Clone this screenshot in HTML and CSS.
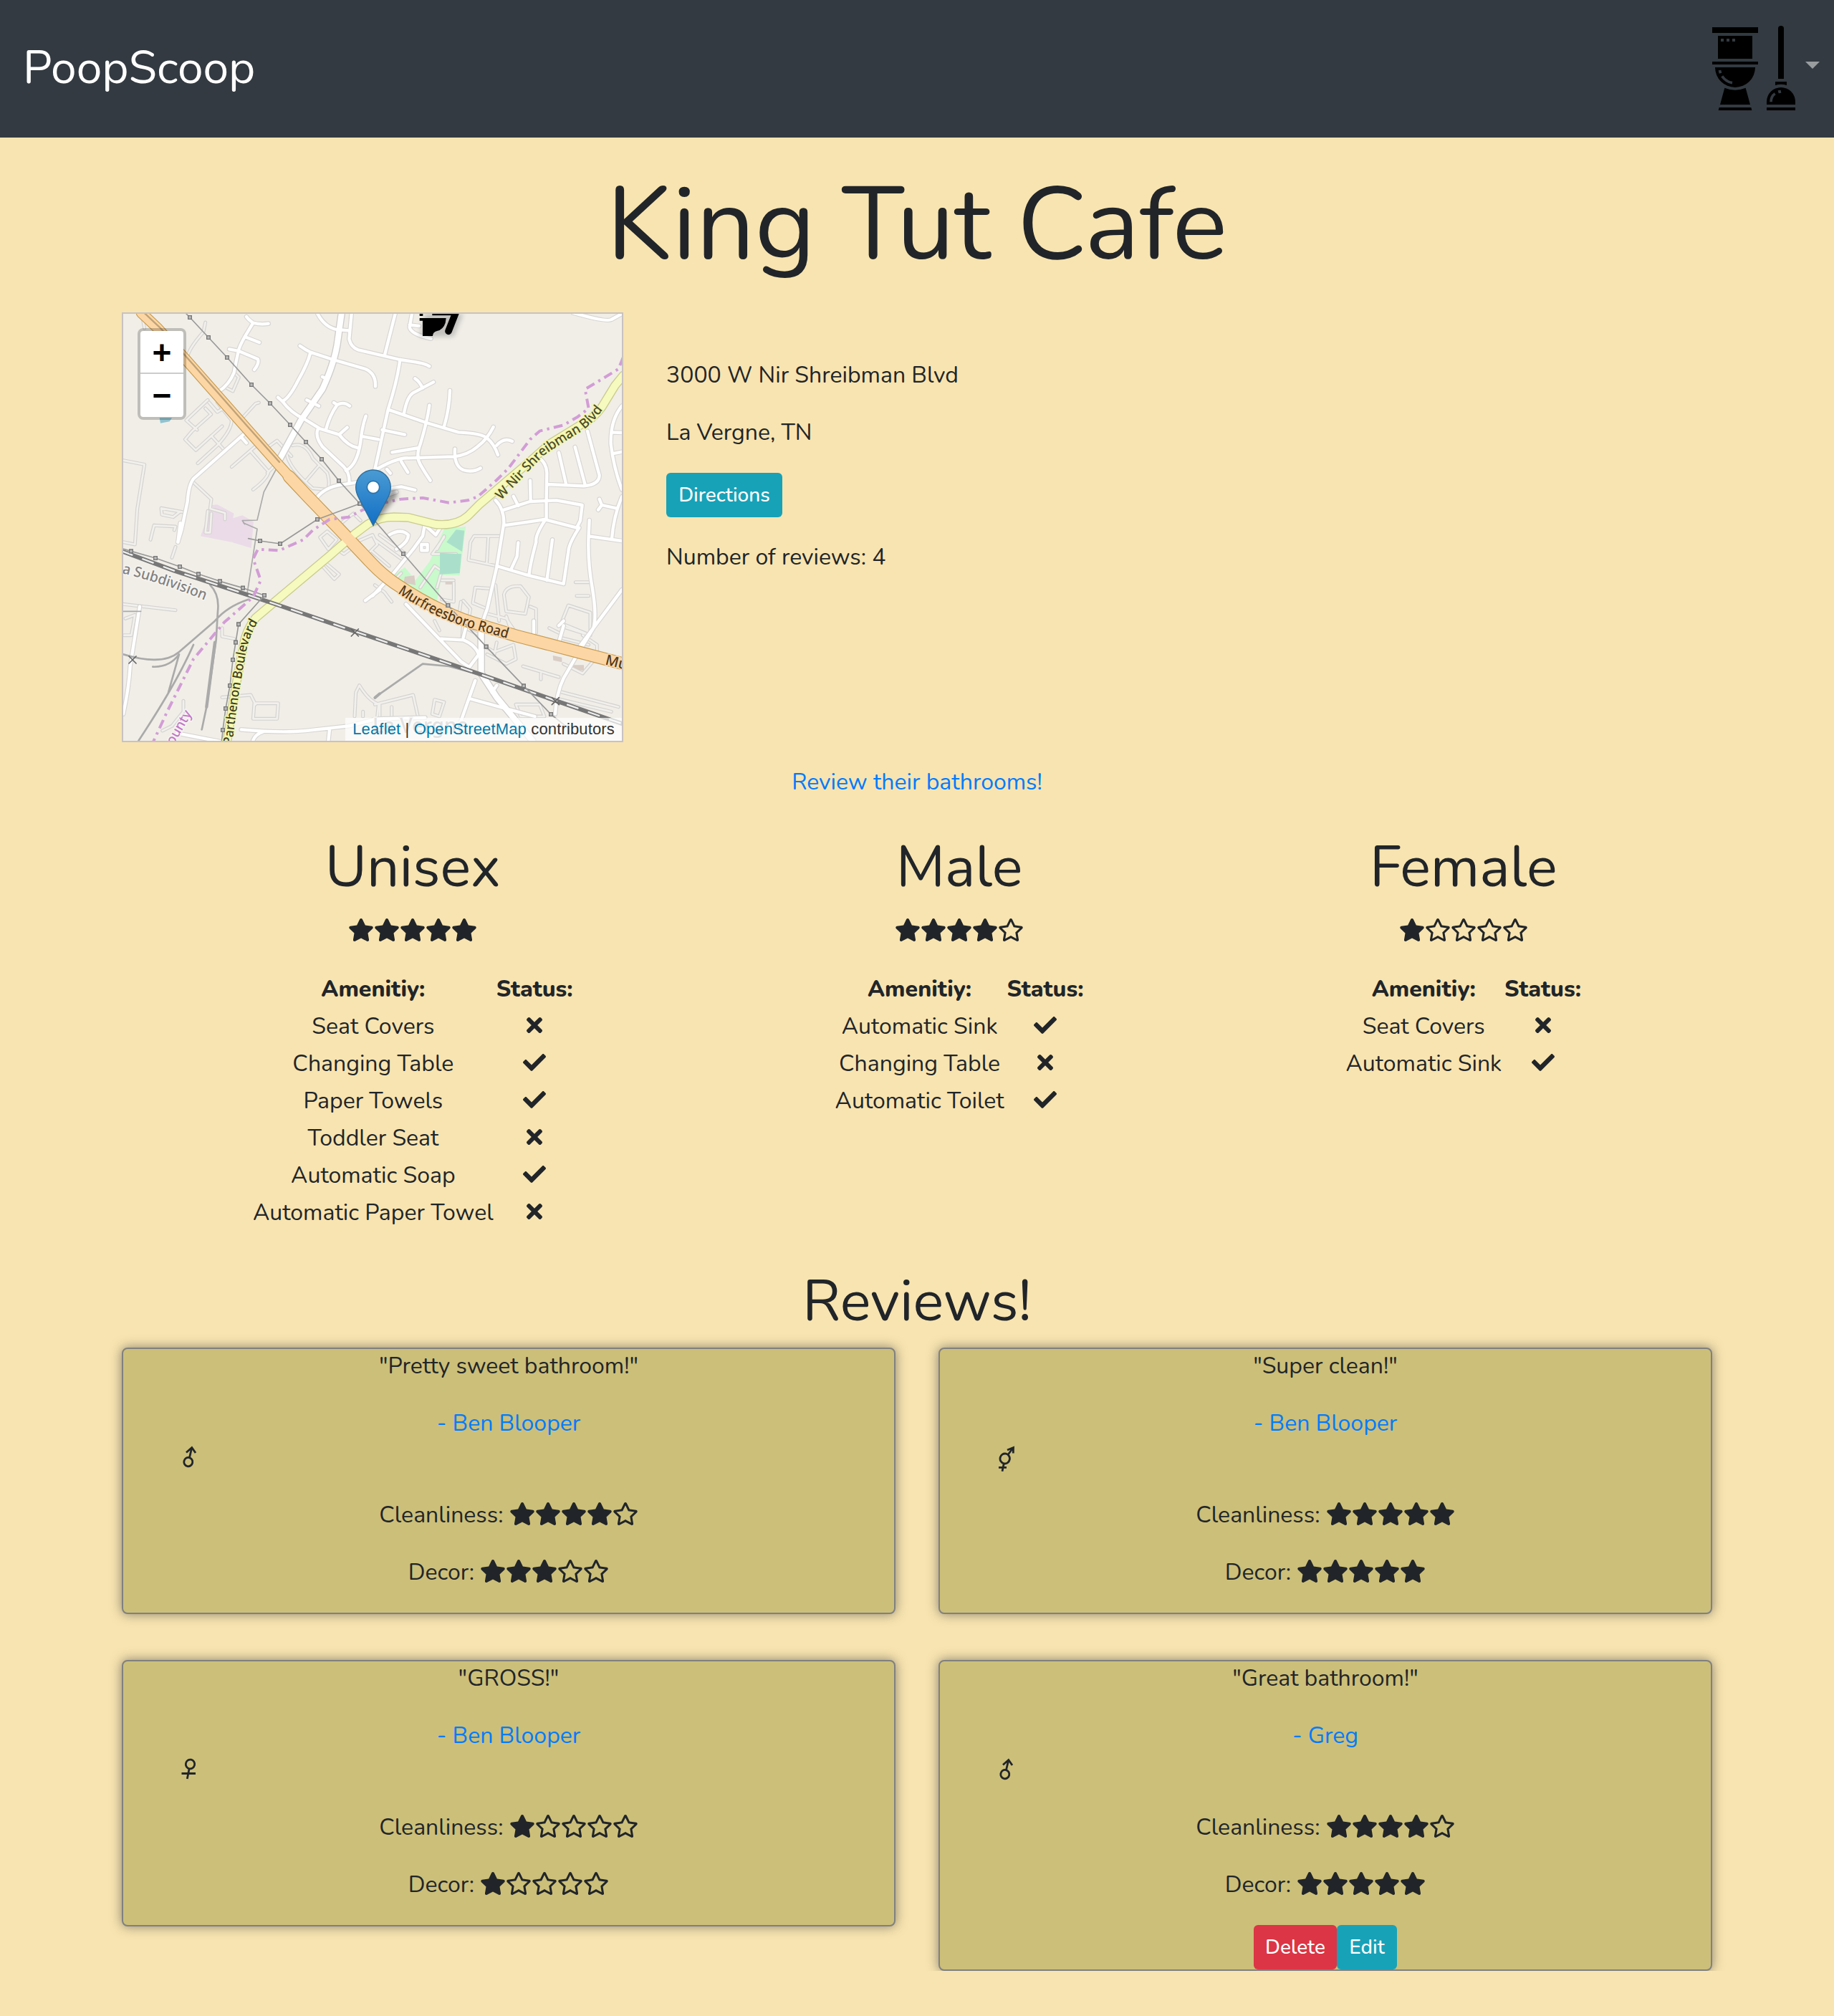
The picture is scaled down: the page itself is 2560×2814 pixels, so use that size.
FILE: index.html
```html
<!DOCTYPE html>
<html lang="en">
<head>
<meta charset="utf-8">
<title>PoopScoop - King Tut Cafe</title>
<link rel="stylesheet" href="styles.css">
</head>
<body>
<svg class="sprite" aria-hidden="true">
  <symbol id="star" viewBox="0 0 576 512"><path d="M259.3 17.8L194 150.2 47.9 171.5c-26.2 3.8-36.7 36.1-17.7 54.6l105.7 103-25 145.5c-4.5 26.3 23.2 46 46.4 33.7L288 439.6l130.7 68.7c23.2 12.2 50.9-7.4 46.4-33.7l-25-145.5 105.7-103c19-18.5 8.5-50.8-17.7-54.6L382 150.2 316.7 17.8c-11.7-23.6-45.6-23.9-57.4 0z"/></symbol>
  <symbol id="star-o" viewBox="0 0 576 512"><path d="M528.1 171.5L382 150.2 316.7 17.8c-11.7-23.6-45.6-23.9-57.4 0L194 150.2 47.9 171.5c-26.2 3.8-36.7 36.1-17.7 54.6l105.7 103-25 145.5c-4.5 26.3 23.2 46 46.4 33.7L288 439.6l130.7 68.7c23.2 12.2 50.9-7.4 46.4-33.7l-25-145.5 105.7-103c19-18.5 8.5-50.8-17.7-54.6zM388.6 312.3l23.7 138.4L288 385.4l-124.3 65.3 23.7-138.4-100.6-98 139-20.2 62.2-126 62.2 126 139 20.2-100.6 98z"/></symbol>
  <symbol id="stars-1" viewBox="0 0 180 32"><use href="#star" width="36" height="32"/><use href="#star-o" x="36" width="36" height="32"/><use href="#star-o" x="72" width="36" height="32"/><use href="#star-o" x="108" width="36" height="32"/><use href="#star-o" x="144" width="36" height="32"/></symbol>
  <symbol id="stars-3" viewBox="0 0 180 32"><use href="#star" width="36" height="32"/><use href="#star" x="36" width="36" height="32"/><use href="#star" x="72" width="36" height="32"/><use href="#star-o" x="108" width="36" height="32"/><use href="#star-o" x="144" width="36" height="32"/></symbol>
  <symbol id="stars-4" viewBox="0 0 180 32"><use href="#star" width="36" height="32"/><use href="#star" x="36" width="36" height="32"/><use href="#star" x="72" width="36" height="32"/><use href="#star" x="108" width="36" height="32"/><use href="#star-o" x="144" width="36" height="32"/></symbol>
  <symbol id="stars-5" viewBox="0 0 180 32"><use href="#star" width="36" height="32"/><use href="#star" x="36" width="36" height="32"/><use href="#star" x="72" width="36" height="32"/><use href="#star" x="108" width="36" height="32"/><use href="#star" x="144" width="36" height="32"/></symbol>
  <symbol id="times" viewBox="0 0 352 512"><path d="M242.72 256l100.07-100.07c12.28-12.28 12.28-32.19 0-44.48l-22.24-22.24c-12.28-12.28-32.19-12.28-44.48 0L176 189.28 75.93 89.21c-12.28-12.28-32.19-12.28-44.48 0L9.21 111.45c-12.28 12.28-12.28 32.19 0 44.48L109.28 256 9.21 356.07c-12.28 12.28-12.28 32.19 0 44.48l22.24 22.24c12.28 12.28 32.2 12.28 44.48 0L176 322.72l100.07 100.07c12.28 12.28 32.2 12.28 44.48 0l22.24-22.24c12.28-12.28 12.28-32.19 0-44.48L242.72 256z"/></symbol>
  <symbol id="check" viewBox="0 0 512 512"><path d="M173.898 439.404l-166.4-166.4c-9.997-9.997-9.997-26.206 0-36.204l36.203-36.204c9.997-9.998 26.207-9.998 36.204 0L192 312.69 432.095 72.596c9.997-9.997 26.207-9.997 36.204 0l36.203 36.204c9.997 9.997 9.997 26.206 0 36.204l-294.4 294.401c-9.998 9.997-26.207 9.997-36.204-.001z"/></symbol>
  <symbol id="male" viewBox="0 0 32 48"><g fill="none" stroke="currentColor" stroke-width="2.8"><ellipse cx="14.800" cy="29.600" rx="6" ry="6.200" transform="rotate(12 14.800 29.600)"/><path d="M16.4 24L19.800 9.500M12 16.500L19.800 9.500L25 17"/></g></symbol>
  <symbol id="female" viewBox="0 0 32 48"><g fill="none" stroke="currentColor" stroke-width="2.8"><ellipse cx="17.500" cy="15.500" rx="6.200" ry="6.400" transform="rotate(12 17.500 15.500)"/><path d="M16.200 21.500L13.300 36M5.500 28.500H25"/></g></symbol>
  <symbol id="unisex" viewBox="0 0 32 48"><g fill="none" stroke="currentColor" stroke-width="2.8"><ellipse cx="14.700" cy="25" rx="6.700" ry="7" transform="rotate(12 14.700 25)"/><path d="M19 19.500L26 10M18 13L26.500 9.500L26.300 17.500M13.200 32L11 42.700M6 37.300H17"/></g></symbol>
</svg>

<nav class="navbar">
  <a class="brand">PoopScoop</a>
  <a class="menu">
    <svg class="menu-icon" viewBox="150 108 348 354">
      <path d="M150 114h192v24H150zM174 150h144v96H174zM150 258h192v12H150zM162 282h168a84 84 0 0 1-168 0zM202 368q44 18 88 0l19 70H183zM179 450h134l3 12H176zM426 330V119a12 11 0 0 1 24 0v211zM414 342h48v15q-24-8-48 0zM378 438v-12a60 60 0 0 1 120 0v12zM378 450h120v12H378z"/>
      <path class="cut" d="M186 162h12v12h-12zM210 162h12v12h-12zM234 162h12v12h-12zM176 295l11-2 3 12-11 3zM425 379l12-2 2 12-11 2z"/>
      <path class="shine" d="M191 319q18 24 43 28M396 427q0-24 17-35"/>
    </svg>
    <span class="caret"></span>
  </a>
</nav>

<main class="container">
  <h1 class="title">King Tut Cafe</h1>

  <section class="place">
    <div class="map">
      <svg class="tiles" viewBox="36 54 2088 1788">
        <defs>
          <linearGradient id="pin" x1="0" y1="0" x2="0" y2="1"><stop offset="0" stop-color="#4a9bd3"/><stop offset="1" stop-color="#126fc6"/></linearGradient>
          <filter id="soft" x="-50%" y="-50%" width="200%" height="200%"><feGaussianBlur stdDeviation="9"/></filter>
          <marker id="tower" viewBox="0 0 18 18" refX="9" refY="9" markerWidth="20" markerHeight="20" markerUnits="userSpaceOnUse"><path d="M2.500 2.500h13v13h-13z" fill="#bbb" stroke="#777" stroke-width="4"/></marker>
          <g id="service">
            <path d="M115 60L125 115M380 90L372 130Q310 200 305 235M390 415L300 500L345 540M380 450L404 475L325 545L295 580L340 625L450 525M405 565L455 620M348 680L430 605Q490 540 490 500L430 425M490 695L600 600M570 630L645 715Q640 745 580 790M535 490L590 430L604 426M500 300L520 320L495 378L470 365M430 410L455 450L430 465L395 425M645 610L680 585L740 650M745 605Q800 590 830 660L890 720Q905 770 890 790L830 785Q730 700 720 640M855 690L800 755M670 690L640 720M36 668L125 685L95 870L85 1020L36 1010"/>
            <path d="M290 885L195 868L198 895L245 905L272 884M165 940L255 945L250 960M165 940L150 1000M330 760L405 830L400 870L462 888L462 915M390 880L380 970L400 970L405 890M36 1270L255 1295M45 1330L85 1315L70 1400L40 1400M450 1370V1405L500 1415M255 1030L240 1075M288 1675V1720L240 1780L200 1800M450 1660L570 1650L590 1690M585 1685H685L680 1750H580ZM1005 1740L1010 1640L1025 1610Q1060 1670 1105 1690L1100 1740M1040 1720V1740"/>
            <path d="M860 990L890 965L930 1000L895 1040ZM950 930L1000 890L1030 920M930 1040L960 1060L1000 1030M875 1090L940 1145L920 1165L870 1110M1010 1010L1080 980L1100 1020L1060 1060M1090 1000L1200 1080M1110 980L1220 1060M1080 1050L1150 1110M1060 1090L1110 1130M1090 1190L1130 1220L1160 1260M1110 1140L1160 1180L1200 1140"/>
            <path d="M1490 1010L1505 985L1620 985M1490 1010L1482 1085L1600 1110M1565 990L1558 1100M1510 1200L1500 1265L1560 1290M1510 1200L1580 1205M1450 1260L1440 1330L1510 1360M1460 1255L1490 1290L1480 1350M1630 1230Q1640 1190 1700 1195L1735 1240L1720 1310L1640 1300ZM1595 1190L1610 1340M1560 1310L1640 1330L1680 1390M1640 1320L1660 1380M1740 1280L1765 1290V1390M1820 1370L1860 1390M1900 1275L1992 1305V1400L1870 1350ZM1880 1365L1990 1400M1865 1410L1985 1440M1555 1450L1590 1470L1670 1440L1680 1500L1640 1520L1560 1480M1600 1430L1590 1480M1340 1340L1360 1380M1460 1350L1455 1410M1470 1370L1530 1400M1960 1400L2020 1440V1490L1960 1560L1880 1520"/>
            <path d="M1710 1530L1860 1575M1785 1560V1585M1860 1635L2110 1700M1850 1665L2080 1720M1680 1690L1700 1740L1800 1740L1780 1690ZM1340 1670L1380 1680L1360 1740L1330 1730ZM1090 1690L1250 1650L1270 1740M1110 1690V1740M1160 1700V1740M1930 1178H1990M1935 1235H1985M1370 1170H1420M1370 1250L1420 1260V1180M1380 990L1330 1060L1430 1060M1380 985L1350 1040M1280 1200L1340 1110L1370 1130L1350 1200"/>
          </g>
          <g id="roads">
            <path d="M552 66Q560 78 580 92Q610 100 644 95M580 92L545 150Q520 195 518 212Q505 270 500 300Q480 350 435 380M545 150L606 174M480 202L520 210L600 244Q606 262 585 288M850 54Q880 110 930 120L980 124M992 54L982 160Q990 195 1020 205L1195 246L1260 256Q1300 262 1318 274M776 188Q800 205 820 215L915 246L1050 285Q1095 305 1092 358M820 215Q810 260 770 330Q730 410 702 420M684 404L702 420Q740 470 790 492L860 535L940 560Q980 610 1018 615M885 538Q900 480 932 435L918 426M932 435Q960 420 984 440M940 560L974 530M1052 482Q1035 530 1030 590Q1015 690 968 710M1040 568L1105 580M850 540Q840 570 870 610L960 695Q985 720 982 760M870 318L885 325M805 415L855 440M845 826Q880 780 950 770L1080 750M550 550L330 745Q310 770 305 840L280 960L265 1010M530 570L552 595"/>
            <path d="M1175 54L1130 230M1195 246Q1185 330 1145 455Q1115 590 1080 750M1145 455L1305 510L1440 550Q1540 555 1560 575Q1590 600 1605 645M1212 470Q1225 400 1250 385L1335 340M1290 365Q1275 335 1258 325M1404 375Q1402 450 1380 525M1318 437Q1310 500 1280 600Q1260 650 1280 685Q1300 720 1322 752M1120 540L1215 560M1162 634L1275 615M1080 715Q1180 655 1230 658L1420 652Q1480 645 1520 610Q1560 580 1586 528M1425 620Q1420 690 1460 708Q1500 720 1532 700M1600 605Q1630 570 1665 588M1200 672L1228 718M1245 54L1235 110Q1240 140 1325 158M1235 100L1275 105M1160 785L1200 778L1258 792M1140 705L1155 722M1110 825L1180 800M1920 50Q2060 90 2080 78L2124 54"/>
            <path d="M1980 545L2030 730Q2030 770 1965 775L1812 768M1860 635L1890 765M1928 612L1970 770M1780 660Q1808 680 1810 720L1808 835L1808 910Q1760 980 1765 1010Q1740 1100 1735 1150M1595 835Q1630 870 1630 930L1600 1115L1560 1290Q1540 1340 1535 1380M1630 875L1740 840L1850 835L1958 855L1950 920L1935 950L1800 915L1735 925L1630 940M1740 752L1742 835M1670 818L1690 858M2124 440Q2075 500 2078 600Q2090 700 2124 790M2080 550L2124 552M2084 640L2124 632M2124 820Q2090 900 2082 995M2100 868L2040 855L2030 830M2040 855L2025 875M1988 918L1985 980Q1980 1090 2000 1200Q2020 1320 2005 1370L1950 1460L1880 1580Q1850 1640 1845 1730M1985 985L2124 1005M2124 1210L1945 1450M1945 950Q1900 1020 1900 1050L1880 1185L1735 1150L1600 1110M1690 1012L1685 1070L1662 1120M1833 1000L1810 1170"/>
            <path d="M1150 980Q1200 950 1230 980Q1230 1010 1180 1040M1300 930L1290 985L1250 1040L1160 1150L1080 1235M1290 930L1345 980L1370 940M1285 1020h25v25h-25zM1220 1270L1450 1510L1480 1530M1365 1415L1460 1420Q1510 1440 1525 1480L1480 1540M1460 1410L1470 1370M1860 1360L1880 1340M1510 1590L1450 1760M1485 1665L1630 1705L1760 1740M1600 1610L1580 1640M1860 1430L1880 1360M105 1280L65 1530Q60 1620 36 1730M275 930L265 1010M260 1810L440 1845M530 1795Q700 1810 800 1800L980 1780L1100 1750L1300 1745M580 1840Q590 1815 620 1805M900 1795L895 1842M1050 1255L1110 1210M1755 1340V1390"/>
          </g>
          <g id="collector"><path d="M950 54L935 160Q925 250 870 370L780 500L690 665M1535 1390V1560L1600 1660L1750 1842"/></g>
          <path id="trunkNorth" d="M112 50L180 114L300 248L540 520L690 690L780 790"/>
          <path id="trunkSouth" d="M730 735L810 820L940 955L1080 1103Q1120 1145 1170 1180Q1280 1255 1380 1300Q1450 1335 1540 1360L1680 1402L1940 1470L2140 1522"/>
          <path id="second" d="M2130 312L2095 355L2040 445Q2000 500 1950 520L1820 600L1730 680L1530 850L1480 900Q1430 945 1340 935L1230 907L1170 905Q1110 905 1060 935L1000 980L900 1067L700 1235L590 1328Q550 1380 540 1440L510 1600L490 1720L470 1850"/>
          <path id="wire" d="M300 54L315 69L393 153L471 237L573 351L651 429L735 519L801 591L867 663L939 753L1027 849L1209 1059L1396 1275L1556 1448L1713 1612L1827 1731L1900 1790"/>
          <path id="nirText" d="M1618 835Q1740 705 1800 645Q1880 590 1950 550Q2010 510 2065 425"/>
          <path id="parText" d="M492 1860Q515 1660 545 1500Q560 1400 610 1330"/>
          <path id="murText" d="M1185 1222Q1330 1325 1490 1370Q1600 1400 1680 1424"/>
          <path id="subText" d="M30 1140Q200 1180 400 1262"/>
        </defs>
        <path d="M0 0H2200V1900H0z" fill="#f1eee8"/>
        <path d="M408 855L430 853L500 890L496 910L535 898L582 925L572 1035L490 1010L360 985L390 900z" fill="#ebdbe8"/>
        <path d="M1380 955L1470 945L1445 1150L1370 1148L1348 1270L1260 1230L1160 1155L1215 1115L1260 1170L1320 1090z" fill="#c8facc"/>
        <path d="M188 490H240L230 505L192 512z" fill="#8fc3d0"/>
        <path d="M1215 1155L1255 1150L1260 1190L1210 1180zM1385 1165h40v22h-40zM1835 1485l38 8v20l-36-8zM1920 1525h45v22h-45z" fill="#d9cdc5"/>
        <g class="lines">
          <use href="#service" stroke="#d4d2d0" stroke-width="15"/>
          <use href="#service" stroke="#f2f0ed" stroke-width="8"/>
          <use href="#roads" stroke="#d8d6d4" stroke-width="20"/>
          <use href="#collector" stroke="#cfcdcb" stroke-width="32"/>
          <use href="#roads" stroke="#fff" stroke-width="13"/>
          <use href="#collector" stroke="#fff" stroke-width="24"/>
          <path d="M1390 1010L1430 958L1465 962L1455 1050zM1362 1055L1452 1060L1445 1140L1362 1145z" fill="#aae0cb"/>
          <g stroke="#aaa" stroke-width="8">
            <path d="M400 1190Q440 1230 432 1300L425 1420L385 1700L365 1795M560 1250Q470 1280 420 1340L270 1470Q200 1530 36 1480M160 1532Q230 1535 270 1480L225 1640M330 1440Q260 1600 100 1842M1090 1660L1290 1520L1400 1530L1530 1565"/>
            <path d="M420 1430L385 1700" stroke-width="13"/><path d="M1090 1662L1110 1645" stroke-width="12"/>
          </g>
          <path d="M690 680L625 800L597 918L535 920L545 935M540 930L597 955L555 1225M36 1300H110" stroke="#aaa" stroke-width="5"/>
          <use href="#second" stroke="#c9cc8d" stroke-width="38"/>
          <use href="#trunkNorth" stroke="#c79b50" stroke-width="46"/>
          <use href="#trunkSouth" stroke="#c79b50" stroke-width="54"/>
          <use href="#second" stroke="#f7fabf" stroke-width="30"/>
          <use href="#trunkNorth" stroke="#fcd6a4" stroke-width="39"/>
          <use href="#trunkSouth" stroke="#fcd6a4" stroke-width="47"/>
          <path d="M124 50L190 112L310 245L550 518L690 675" stroke="#c0a278" stroke-width="7"/>
          <path d="M30 1048L250 1130L560 1232L680 1272L1000 1382L1530 1563L1850 1675L2080 1755L2130 1772" stroke="#777" stroke-width="18"/>
          <path d="M30 1048L250 1130L560 1232L680 1272L1000 1382L1530 1563L1850 1675L2080 1755L2130 1772" stroke="#eee" stroke-width="7" stroke-dasharray="46 48"/>
          <g stroke="#999" stroke-width="5" marker-mid="url(#tower)">
            <use href="#wire"/>
            <path d="M1027 849L1027 849L849 915L693 1017L609 1005L560 995"/>
            <path d="M30 1037L69 1048L171 1077L273 1113L351 1144L441 1174L537 1202L627 1233L519 1354L507 1430L495 1503L483 1611L465 1707L453 1797L448 1850"/>
          </g>
          <path d="M60 1488l30 30m0-30l-30 30M991 1374l30 30m0-30l-30 30M1831 1661l30 30m0-30l-30 30" stroke="#666" stroke-width="5"/>
          <path d="M2130 235L2110 285L2020 340L1970 370L1985 450L1940 485L1880 520L1780 545L1740 580L1650 700L1600 750L1520 820L1480 835L1400 845L1290 825L1200 830L1080 855L980 905L900 915L830 960L790 1000L690 1045L600 1040L580 1080L612 1170L580 1240L460 1345L330 1500L280 1600L220 1720L160 1850" stroke="#d29dd6" stroke-width="12" stroke-dasharray="38 19 10 19" stroke-linecap="butt"/>
        </g>
        <g class="labels">
          <text font-size="56" fill="#4c4a2c" stroke="#f2f6a9"><textPath href="#nirText" textLength="575" lengthAdjust="spacingAndGlyphs">W Nir Shreibman Blvd</textPath></text>
          <text font-size="54" fill="#3c3c25" stroke="#f2f6a9"><textPath href="#parText" textLength="530" lengthAdjust="spacingAndGlyphs">Parthenon Boulevard</textPath></text>
          <text font-size="60" fill="#4d3820" stroke="#fcd6a4"><textPath href="#murText" textLength="500" lengthAdjust="spacingAndGlyphs">Murfreesboro Road</textPath></text>
          <text font-size="60" fill="#4d3820" stroke="#fcd6a4" transform="translate(2052 1522) rotate(14)">Mu</text>
          <text font-size="60" fill="#808080" stroke="#f6f4f0"><textPath href="#subText" textLength="366" lengthAdjust="spacingAndGlyphs">a Subdivision</textPath></text>
          <text font-size="56" fill="#c277c8" stroke="#f6f4f0" transform="translate(246 1862) rotate(-60)">ounty</text>
          <text font-size="84" fill="#999" stroke="#f6f4f0" x="1080" y="1808">La Vergne</text>
        </g>
        <path d="M1083 943L1180 820Q1190 780 1160 790L1100 850z" fill="#000" opacity=".4" filter="url(#soft)"/>
        <path d="M1083 941L1023 826Q1010 802 1010 780A73 72 0 0 1 1156 780Q1156 802 1143 826z" fill="url(#pin)" stroke="#2d6f9f" stroke-width="4"/>
        <circle cx="1083" cy="780" r="26" fill="#fff" stroke="#2d74ab" stroke-width="5"/>
        <path d="M1277 150L1420 150L1460 54H1300z" opacity=".22" filter="url(#soft)"/>
        <path d="M1277 54h14v9h-14zM1330 54h100v7h-100zM1277 72H1388L1385 92Q1376 120 1350 126Q1332 130 1332 147H1290V83H1277z" fill="#000"/>
        <path d="M1432 40L1398 127" stroke="#000" stroke-width="29" stroke-linecap="round"/>
      </svg>
      <div class="zoom"><a>+</a><a>&minus;</a></div>
      <div class="attribution"><a>Leaflet</a> | <a>OpenStreetMap</a> contributors</div>
    </div>
    <div class="info">
      <p class="line">3000 W Nir Shreibman Blvd</p>
      <p class="line city">La Vergne, TN</p>
      <a class="btn btn-info directions">Directions</a>
      <p class="line">Number of reviews: 4</p>
    </div>
  </section>

  <a class="line link review-link">Review their bathrooms!</a>

  <section class="rooms">
    <div class="room">
      <h2>Unisex</h2>
      <svg class="stars"><use href="#stars-5"/></svg>
      <table>
        <tr><th>Amenitiy:</th><th>Status:</th></tr>
        <tr><td>Seat Covers</td><td><svg class="times"><use href="#times"/></svg></td></tr>
        <tr><td>Changing Table</td><td><svg class="check"><use href="#check"/></svg></td></tr>
        <tr><td>Paper Towels</td><td><svg class="check"><use href="#check"/></svg></td></tr>
        <tr><td>Toddler Seat</td><td><svg class="times"><use href="#times"/></svg></td></tr>
        <tr><td>Automatic Soap</td><td><svg class="check"><use href="#check"/></svg></td></tr>
        <tr><td>Automatic Paper Towel</td><td><svg class="times"><use href="#times"/></svg></td></tr>
      </table>
    </div>
    <div class="room">
      <h2>Male</h2>
      <svg class="stars"><use href="#stars-4"/></svg>
      <table>
        <tr><th>Amenitiy:</th><th>Status:</th></tr>
        <tr><td>Automatic Sink</td><td><svg class="check"><use href="#check"/></svg></td></tr>
        <tr><td>Changing Table</td><td><svg class="times"><use href="#times"/></svg></td></tr>
        <tr><td>Automatic Toilet</td><td><svg class="check"><use href="#check"/></svg></td></tr>
      </table>
    </div>
    <div class="room">
      <h2>Female</h2>
      <svg class="stars"><use href="#stars-1"/></svg>
      <table>
        <tr><th>Amenitiy:</th><th>Status:</th></tr>
        <tr><td>Seat Covers</td><td><svg class="times"><use href="#times"/></svg></td></tr>
        <tr><td>Automatic Sink</td><td><svg class="check"><use href="#check"/></svg></td></tr>
      </table>
    </div>
  </section>

  <h2 class="reviews-title">Reviews!</h2>
  <section class="reviews">
    <article class="card">
      <p class="line">"Pretty sweet bathroom!"</p>
      <a class="line link">- Ben Blooper</a>
      <svg class="gender"><use href="#male"/></svg>
      <p class="line">Cleanliness: <svg class="stars"><use href="#stars-4"/></svg></p>
      <p class="line">Decor: <svg class="stars"><use href="#stars-3"/></svg></p>
    </article>
    <article class="card">
      <p class="line">"Super clean!"</p>
      <a class="line link">- Ben Blooper</a>
      <svg class="gender"><use href="#unisex"/></svg>
      <p class="line">Cleanliness: <svg class="stars"><use href="#stars-5"/></svg></p>
      <p class="line">Decor: <svg class="stars"><use href="#stars-5"/></svg></p>
    </article>
    <article class="card">
      <p class="line">"GROSS!"</p>
      <a class="line link">- Ben Blooper</a>
      <svg class="gender"><use href="#female"/></svg>
      <p class="line">Cleanliness: <svg class="stars"><use href="#stars-1"/></svg></p>
      <p class="line">Decor: <svg class="stars"><use href="#stars-1"/></svg></p>
    </article>
    <article class="card">
      <p class="line">"Great bathroom!"</p>
      <a class="line link">- Greg</a>
      <svg class="gender"><use href="#male"/></svg>
      <p class="line">Cleanliness: <svg class="stars"><use href="#stars-4"/></svg></p>
      <p class="line">Decor: <svg class="stars"><use href="#stars-5"/></svg></p>
      <div class="actions"><a class="btn btn-danger">Delete</a><a class="btn btn-info">Edit</a></div>
    </article>
  </section>
</main>
</body>
</html>
```
FILE: styles.css
```css
* { box-sizing: border-box; }
body {
  margin: 0;
  background: #f8e4b0;
  color: #212529;
  font: 32px/48px Nunito, Lato, sans-serif;
}
h1, h2, p { margin: 0; font-weight: 400; }
svg { fill: currentColor; }
.sprite { position: absolute; width: 0; height: 0; }

.navbar {
  display: flex;
  justify-content: space-between;
  align-items: flex-start;
  height: 192px;
  padding: 36px 20px 0 32px;
  background: #333a41;
}
.brand { color: #fff; font-size: 64px; line-height: 96px; padding-top: 11px; }
.menu { display: flex; align-items: flex-start; gap: 14px; }
.menu-icon { width: 116px; height: 118px; fill: #000; }
.menu-icon .cut { fill: #333a41; }
.menu-icon .shine { fill: none; stroke: #333a41; stroke-width: 11; }
.caret {
  margin-top: 50px;
  border: 10px solid transparent;
  border-top-color: #9a9da0;
  border-bottom: 0;
}

.container { width: 2220px; margin: 0 auto; }
.title { height: 244px; padding-top: 36px; font-size: 144px; line-height: 172.8px; text-align: center; }

.place { display: flex; gap: 60px; height: 600px; }
.map { position: relative; width: 700px; height: 600px; border: 2px solid #c8c2c2; overflow: hidden; }
.tiles { display: block; width: 696px; height: 596px; }
.lines { fill: none; stroke-linecap: round; stroke-linejoin: round; }
.labels {
  font-family: "Noto Sans", sans-serif;
  font-weight: 500;
  stroke-width: 10px;
  paint-order: stroke;
  stroke-linejoin: round;
}
.zoom {
  position: absolute;
  left: 20px;
  top: 20px;
  width: 68px;
  border: 4px solid rgba(0, 0, 0, 0.2);
  border-radius: 8px;
  background: #fff;
  background-clip: padding-box;
}
.zoom a {
  display: block;
  height: 60px;
  color: #000;
  font: bold 46px/60px "Liberation Sans", sans-serif;
  text-align: center;
}
.zoom a:first-child { border-bottom: 2px solid #ccc; }
.attribution {
  position: absolute;
  right: 0;
  bottom: 0;
  padding: 0 10px;
  background: rgba(255, 255, 255, 0.7);
  color: #333;
  font: 22px/32px "Liberation Sans", sans-serif;
  letter-spacing: 0.15px;
  white-space: nowrap;
}
.attribution a { color: #0078a8; }

.info { display: flex; flex-direction: column; align-items: flex-start; gap: 32px; padding-top: 64px; }
.line { display: block; height: 48px; white-space: nowrap; }
.link { color: #007bff; }
.btn {
  display: block;
  height: 62px;
  padding: 10px 0;
  border-radius: 6px;
  color: #fff;
  font-size: 28px;
  font-weight: 500;
  line-height: 42px;
  text-align: center;
}
.btn-info { background: #17a2b8; width: 84px; }
.btn-danger { background: #dc3545; width: 116px; }
.directions { width: 162px; }

.review-link { margin-top: 32px; text-align: center; }

.rooms { display: flex; justify-content: space-around; height: 606px; margin-top: 47px; }
.room { display: flex; flex-direction: column; align-items: center; }
h2 { height: 112px; font-size: 80px; line-height: 96px; text-align: center; }
.stars { width: 180px; height: 32px; vertical-align: -4px; }
.room .stars { margin: 7px 0 41px; }
table { border-collapse: collapse; text-align: center; }
th, td { height: 52px; padding: 2px; white-space: nowrap; }
th { font-weight: 800; }
.times { width: 22px; height: 32px; vertical-align: -4px; }
.check { width: 32px; height: 32px; vertical-align: -4px; }

.reviews { display: grid; grid-template-columns: 1080px 1080px; gap: 64px 60px; align-items: start; }
.card {
  display: flex;
  flex-direction: column;
  align-items: center;
  border: 2px solid gray;
  border-radius: 8px;
  background: #ccbf79;
  box-shadow: 0 0 16px rgba(60, 60, 60, 0.6);
}
.card .line { margin-bottom: 32px; }
.card .link { margin-bottom: 0; }
.gender { align-self: flex-start; width: 32px; height: 48px; margin: 0 0 32px 76px; }
.actions { display: flex; }
```
